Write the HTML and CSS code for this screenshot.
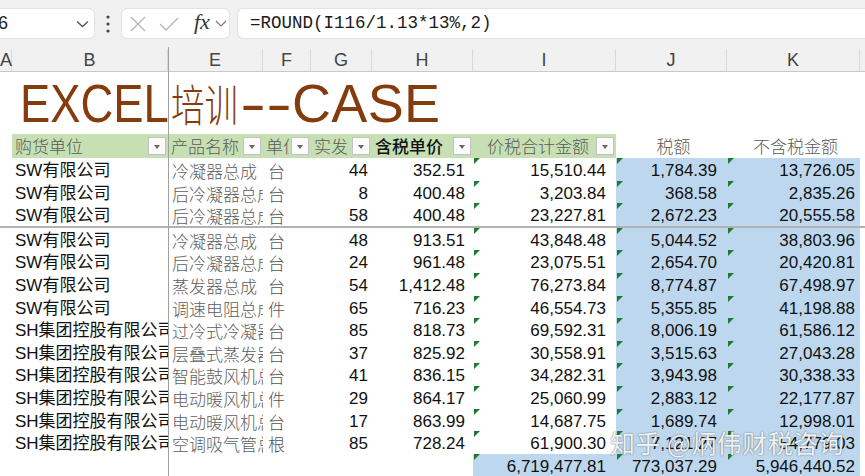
FILE: index.html
```html
<!DOCTYPE html>
<html lang="zh-CN">
<head>
<meta charset="utf-8">
<title>EXCEL培训--CASE</title>
<link rel="stylesheet" href="styles.css">
</head>
<body>
<div class="sheet">
  <div class="toolbar">
    <div class="namebox">
      <span class="nb-text">6</span>
      <svg class="chev" width="13" height="8" viewBox="0 0 13 8"><path d="M1 1.5 L6.5 6.5 L12 1.5" fill="none" stroke="#555" stroke-width="1.3"/></svg>
    </div>
    <svg class="kebab" width="6" height="20" viewBox="0 0 6 20"><circle cx="3" cy="3" r="1.6" fill="#444"/><circle cx="3" cy="10" r="1.6" fill="#444"/><circle cx="3" cy="17" r="1.6" fill="#444"/></svg>
    <div class="fxbox">
      <svg width="18" height="18" viewBox="0 0 18 18"><path d="M2 2 L16 16 M16 2 L2 16" stroke="#b4b4b4" stroke-width="1.3" fill="none"/></svg>
      <svg width="20" height="16" viewBox="0 0 20 16"><path d="M1 8 L7 14 L19 2" stroke="#b4b4b4" stroke-width="1.3" fill="none"/></svg>
      <span class="fx">fx</span>
      <svg class="chev-s" width="12" height="7" viewBox="0 0 12 7"><path d="M1 1 L6 6 L11 1" fill="none" stroke="#777" stroke-width="1.1"/></svg>
    </div>
    <div class="formula">=ROUND(I116/1.13*13%,2)</div>
  </div>

  <div class="row colhead">
    <div class="ch ch-a">A</div>
    <div class="ch ch-b">B</div>
    <div class="ch">E</div>
    <div class="ch">F</div>
    <div class="ch">G</div>
    <div class="ch">H</div>
    <div class="ch">I</div>
    <div class="ch">J</div>
    <div class="ch">K</div>
    <div class="ch ch-rest"></div>
  </div>

  <div class="title-row">
    <span class="t-en">EXCEL</span><span class="t-cn">培训</span><span class="t-dash">--</span><span class="t-case">CASE</span>
  </div>

  <div class="row hdr">
    <div class="c"></div>
    <div class="c g f"><span class="ht">购货单位</span><span class="fb"></span></div>
    <div class="c g f"><span class="ht">产品名称</span><span class="fb"></span></div>
    <div class="c g f"><span class="ht">单位</span><span class="fb"></span></div>
    <div class="c g f"><span class="ht">实发</span><span class="fb"></span></div>
    <div class="c g f"><span class="ht bold">含税单价</span><span class="fb"></span></div>
    <div class="c g f"><span class="ht pad-i">价税合计金额</span><span class="fb"></span></div>
    <div class="c hc">税额</div>
    <div class="c hc">不含税金额</div>
    <div class="c"></div>
  </div>

  <div class="rows-top">
    <div class="row d"><div class="c"></div><div class="c co">SW有限公司</div><div class="c pn">冷凝器总成</div><div class="c un">台</div><div class="c n ng">44</div><div class="c n nh">352.51</div><div class="c n ni tri">15,510.44</div><div class="c n nj b tri">1,784.39</div><div class="c n nk b tri">13,726.05</div><div class="c"></div></div>
    <div class="row d"><div class="c"></div><div class="c co">SW有限公司</div><div class="c pn">后冷凝器总成</div><div class="c un">台</div><div class="c n ng">8</div><div class="c n nh">400.48</div><div class="c n ni tri">3,203.84</div><div class="c n nj b tri">368.58</div><div class="c n nk b tri">2,835.26</div><div class="c"></div></div>
    <div class="row d"><div class="c"></div><div class="c co">SW有限公司</div><div class="c pn">后冷凝器总成</div><div class="c un">台</div><div class="c n ng">58</div><div class="c n nh">400.48</div><div class="c n ni tri">23,227.81</div><div class="c n nj b tri">2,672.23</div><div class="c n nk b tri">20,555.58</div><div class="c"></div></div>
  </div>

  <div class="freeze-h"></div>

  <div class="rows-main">
    <div class="row d"><div class="c"></div><div class="c co">SW有限公司</div><div class="c pn">冷凝器总成</div><div class="c un">台</div><div class="c n ng">48</div><div class="c n nh">913.51</div><div class="c n ni tri">43,848.48</div><div class="c n nj b tri">5,044.52</div><div class="c n nk b tri">38,803.96</div><div class="c"></div></div>
    <div class="row d"><div class="c"></div><div class="c co">SW有限公司</div><div class="c pn">后冷凝器总成</div><div class="c un">台</div><div class="c n ng">24</div><div class="c n nh">961.48</div><div class="c n ni tri">23,075.51</div><div class="c n nj b tri">2,654.70</div><div class="c n nk b tri">20,420.81</div><div class="c"></div></div>
    <div class="row d"><div class="c"></div><div class="c co">SW有限公司</div><div class="c pn">蒸发器总成</div><div class="c un">台</div><div class="c n ng">54</div><div class="c n nh">1,412.48</div><div class="c n ni tri">76,273.84</div><div class="c n nj b tri">8,774.87</div><div class="c n nk b tri">67,498.97</div><div class="c"></div></div>
    <div class="row d"><div class="c"></div><div class="c co">SW有限公司</div><div class="c pn">调速电阻总成</div><div class="c un">件</div><div class="c n ng">65</div><div class="c n nh">716.23</div><div class="c n ni tri">46,554.73</div><div class="c n nj b tri">5,355.85</div><div class="c n nk b tri">41,198.88</div><div class="c"></div></div>
    <div class="row d"><div class="c"></div><div class="c co">SH集团控股有限公司</div><div class="c pn">过冷式冷凝器</div><div class="c un">台</div><div class="c n ng">85</div><div class="c n nh">818.73</div><div class="c n ni tri">69,592.31</div><div class="c n nj b tri">8,006.19</div><div class="c n nk b tri">61,586.12</div><div class="c"></div></div>
    <div class="row d"><div class="c"></div><div class="c co">SH集团控股有限公司</div><div class="c pn">层叠式蒸发器</div><div class="c un">台</div><div class="c n ng">37</div><div class="c n nh">825.92</div><div class="c n ni tri">30,558.91</div><div class="c n nj b tri">3,515.63</div><div class="c n nk b tri">27,043.28</div><div class="c"></div></div>
    <div class="row d"><div class="c"></div><div class="c co">SH集团控股有限公司</div><div class="c pn">智能鼓风机总成</div><div class="c un">台</div><div class="c n ng">41</div><div class="c n nh">836.15</div><div class="c n ni tri">34,282.31</div><div class="c n nj b tri">3,943.98</div><div class="c n nk b tri">30,338.33</div><div class="c"></div></div>
    <div class="row d"><div class="c"></div><div class="c co">SH集团控股有限公司</div><div class="c pn">电动暖风机总成</div><div class="c un">件</div><div class="c n ng">29</div><div class="c n nh">864.17</div><div class="c n ni tri">25,060.99</div><div class="c n nj b tri">2,883.12</div><div class="c n nk b tri">22,177.87</div><div class="c"></div></div>
    <div class="row d"><div class="c"></div><div class="c co">SH集团控股有限公司</div><div class="c pn">电动暖风机总成</div><div class="c un">台</div><div class="c n ng">17</div><div class="c n nh">863.99</div><div class="c n ni tri">14,687.75</div><div class="c n nj b tri">1,689.74</div><div class="c n nk b tri">12,998.01</div><div class="c"></div></div>
    <div class="row d"><div class="c"></div><div class="c co">SH集团控股有限公司</div><div class="c pn">空调吸气管总成</div><div class="c un">根</div><div class="c n ng">85</div><div class="c n nh">728.24</div><div class="c n ni tri">61,900.30</div><div class="c n nj b tri">7,121.27</div><div class="c n nk b tri">54,779.03</div><div class="c"></div></div>
    <div class="row d"><div class="c"></div><div class="c"></div><div class="c"></div><div class="c"></div><div class="c"></div><div class="c"></div><div class="c n ni b tri">6,719,477.81</div><div class="c n nj b tri">773,037.29</div><div class="c n nk b tri">5,946,440.52</div><div class="c"></div></div>
  </div>

  <div class="freeze-v"></div>
  <div class="watermark">知乎 @炳伟财税咨询</div>
</div>
</body>
</html>
```

FILE: styles.css
```css
* { box-sizing: border-box; }
html, body { margin: 0; padding: 0; }
body {
  width: 865px;
  height: 476px;
  overflow: hidden;
  background: #ffffff;
  font-family: "Liberation Sans", "Noto Sans CJK SC", sans-serif;
  color: #000;
}
.sheet {
  position: relative;
  width: 865px;
  height: 476px;
  overflow: hidden;
}

/* ---------- toolbar ---------- */
.toolbar {
  height: 46px;
  background: #f1f1f1;
  display: flex;
  align-items: flex-start;
  padding-top: 8px;
}
.namebox {
  margin-left: -12px;
  width: 107px;
  height: 31px;
  background: #fff;
  border: 1px solid #e2e2e2;
  border-radius: 6px;
  display: flex;
  align-items: center;
  justify-content: space-between;
  padding: 0 5px 0 9px;
  font-size: 18px;
  color: #222;
}
.chev { margin-top: 1px; }
.kebab { margin: 6px 0 0 10px; }
.fxbox {
  margin-left: 10px;
  width: 109px;
  height: 31px;
  background: #fff;
  border: 1px solid #e2e2e2;
  border-radius: 6px;
  display: flex;
  align-items: center;
  padding-left: 7px;
  gap: 12px;
}
.fx {
  font-family: "Liberation Serif", serif;
  font-style: italic;
  font-size: 22px;
  color: #333;
  line-height: 1;
  margin-left: 3px;
  margin-top: -3px;
}
.chev-s { margin-left: -7px; }
.formula {
  margin-left: 7px;
  flex: 1;
  height: 31px;
  background: #fff;
  border: 1px solid #e2e2e2;
  border-radius: 6px 0 0 6px;
  border-right: none;
  padding-left: 12px;
  font-family: "Liberation Mono", monospace;
  font-size: 17.5px;
  line-height: 29px;
  color: #1a1a1a;
}

/* ---------- grid rows ---------- */
.row {
  display: grid;
  grid-template-columns: 12px 156px 95px 48px 61px 101px 143px 111px 133px 1fr;
}
.colhead {
  height: 26px;
  background: #f1f1f1;
  border-bottom: 1px solid #c9c9c9;
}
.ch {
  font-size: 18px;
  color: #444;
  text-align: center;
  border-right: 1px solid #dadada;
  margin-top: 3px;
  line-height: 22px;
}
.ch-a { text-align: right; padding-right: 4px; }
.ch-rest { border-right: none; }

/* ---------- title ---------- */
.title-row {
  height: 62px;
  line-height: 62px;
  padding-left: 20px;
  color: #843c0c;
  font-size: 54px;
  white-space: nowrap;
}
.t-en {
  display: inline-block;
  transform: scaleX(0.84);
  transform-origin: 0 0;
  margin-right: -28px;
}
.t-cn {
  display: inline-block;
  font-family: "Noto Sans CJK SC", sans-serif;
  font-weight: 300;
  font-size: 44px;
  transform: scaleX(0.76);
  transform-origin: 0 0;
  margin-right: -20px;
  margin-left: 2px;
}
.t-dash {
  display: inline-block;
  transform: scaleX(1.45);
  transform-origin: 0 0;
  margin-right: 16px;
  margin-left: 1px;
}
.t-case { letter-spacing: 0.3px; }

/* ---------- cells ---------- */
.c {
  position: relative;
  font-size: 17px;
  white-space: nowrap;
  overflow: hidden;
}
.hdr { height: 24px; }
.hdr .c { line-height: 24px; }
.g { background: #c6e0b4; }
.f {
  display: flex;
  align-items: center;
  padding-left: 3px;
}
.ht {
  flex: 1;
  min-width: 0;
  overflow: hidden;
  color: #5a5a5a;
  font-family: "Noto Sans CJK SC", sans-serif;
  font-weight: 300;
}
.ht.bold { color: #111; font-weight: 500; }
.ht.pad-i { padding-left: 11px; }
.fb {
  flex-shrink: 0;
  position: relative;
  width: 18px;
  height: 18px;
  margin: 0 2px 0 2px;
  background: #fbfbfb;
  border: 1px solid #c3c3c3;
}
.fb::after {
  content: "";
  position: absolute;
  left: 5px;
  top: 7px;
  border-left: 3px solid transparent;
  border-right: 3px solid transparent;
  border-top: 4px solid #666;
}
.hc {
  text-align: center;
  color: #5a5a5a;
  font-family: "Noto Sans CJK SC", sans-serif;
  font-weight: 300;
  padding-left: 4px;
}

.d { height: 22.6px; }
.d .c { line-height: 22.6px; padding-top: 2px; }
.co { padding-left: 3px; color: #111; }
.pn {
  padding-left: 4px;
  color: #5e5e5e;
  font-family: "Noto Sans CJK SC", sans-serif;
  font-weight: 300;
  text-overflow: clip;
}
.un {
  padding-left: 5px;
  color: #555;
  font-family: "Noto Sans CJK SC", sans-serif;
  font-weight: 300;
}
.n { text-align: right; color: #111; }
.ng { padding-right: 4px; }
.nh { padding-right: 8px; }
.ni { padding-right: 10px; }
.nj { padding-right: 10px; }
.nk { padding-right: 5px; }
.b { background: #bdd7ee; }
.tri::before {
  content: "";
  position: absolute;
  left: 1px;
  top: 0;
  border-top: 6px solid #1d7a33;
  border-right: 6px solid transparent;
}

.freeze-h {
  height: 2px;
  background: #b3b3b3;
}

/* ---------- overlays ---------- */
.freeze-v {
  position: absolute;
  left: 168px;
  top: 47px;
  width: 1px;
  height: 430px;
  background: #a0a0a0;
}
.watermark {
  position: absolute;
  left: 610px;
  top: 424px;
  font-family: "Noto Sans CJK SC", sans-serif;
  font-size: 25px;
  color: rgba(255, 255, 255, 0.92);
  text-shadow: 0 0 1px rgba(60, 60, 60, 0.6), 0 0 2px rgba(60, 60, 60, 0.4);
  white-space: nowrap;
  letter-spacing: 0.5px;
}
```
